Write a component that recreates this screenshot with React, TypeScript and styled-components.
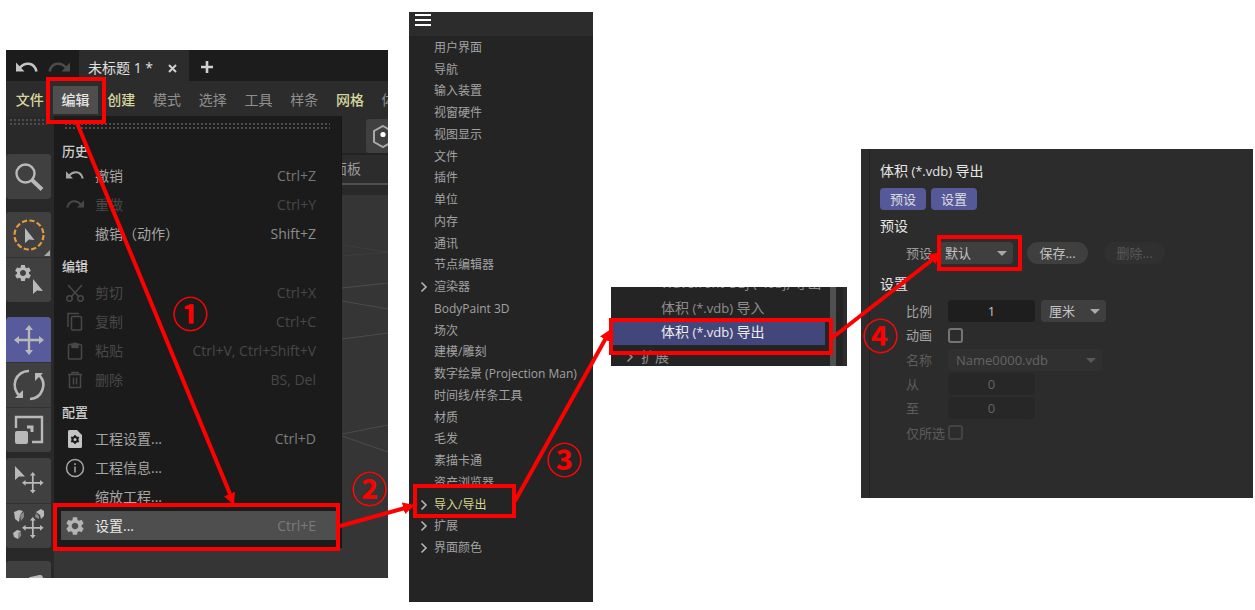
import React from "react";
import styled, { createGlobalStyle, css } from "styled-components";
import { MdSettings } from "react-icons/md";

const latin = '"Open Sans", "Noto Sans CJK SC", sans-serif';

const GlobalStyle = createGlobalStyle`
  *, *::before, *::after { box-sizing: border-box; }
  body { margin: 0; background: #fff; font-family: ${latin}; }
  button, input, select { font: inherit; color: inherit; border: 0; margin: 0; padding: 0; }
  ul { list-style: none; margin: 0; padding: 0; }
  h2, h3 { margin: 0; font-weight: 500; }
  svg { display: block; flex: none; }
`;

const red = "#fe0000";

/* ---------- page ---------- */

const Page = styled.main`
  position: relative;
  display: flex;
  align-items: flex-start;
  padding: 12px 2px 8px 6px;
`;

const Panel = styled.section<{ $grow: number; $top: number; $gap?: number }>`
  position: relative;
  flex: ${(p) => p.$grow} 1 0;
  min-width: 0;
  margin-top: ${(p) => p.$top}px;
  margin-left: ${(p) => p.$gap ?? 0}px;
`;

const Callout = styled.span<{ $x: number; $y: number; $w: number; $h: number }>`
  position: absolute;
  left: ${(p) => p.$x}px;
  top: ${(p) => p.$y}px;
  width: ${(p) => p.$w}px;
  height: ${(p) => p.$h}px;
  border: 4px solid ${red};
  pointer-events: none;
`;

const Step = styled.span<{ $x: number; $y: number }>`
  position: absolute;
  left: ${(p) => p.$x}px;
  top: ${(p) => p.$y}px;
  width: 36px;
  height: 36px;
  color: ${red};
  font: 700 36px/36px "Noto Sans CJK SC", sans-serif;
  text-align: center;
  z-index: 2;
`;

const Arrows = styled.svg`
  position: absolute;
  inset: 0;
  width: 100%;
  height: 100%;
  pointer-events: none;
`;

/* ---------- application window ---------- */

const Window = styled.div`
  height: 528px;
  overflow: hidden;
  display: flex;
  flex-direction: column;
  background: #2c2c2c;
`;

const TitleBar = styled.header`
  display: flex;
  align-items: center;
  height: 31px;
  flex: none;
  padding-left: 9px;
  background: #1c1c1c;
  color: #c4c4c4;
`;

const IconButton = styled.button<{ $dim?: boolean }>`
  display: grid;
  place-items: center;
  width: 32px;
  height: 31px;
  padding: 4px 0 0 1px;
  justify-content: start;
  background: none;
  color: ${(p) => (p.$dim ? "#4c4c4c" : "#c4c4c4")};
`;

const DocTab = styled.div`
  display: flex;
  align-items: center;
  justify-content: space-between;
  width: 110px;
  height: 31px;
  margin-right: 12px;
  padding: 2px 12px 0 9px;
  background: #2c2c2c;
  color: #e0e0e0;
  font-size: 14px;
  white-space: nowrap;
`;

const PlainButton = styled.button`
  display: grid;
  place-items: center;
  padding-top: 3px;
  background: none;
`;

const MenuBar = styled.nav`
  display: flex;
  align-items: flex-start;
  height: 35px;
  flex: none;
  overflow: hidden;
  padding: 5px 0 0 1px;
  background: #2c2c2c;
`;

const MenuButton = styled.button<{ $tone?: "accent" | "active" }>`
  flex: 0 0 12%;
  height: 28px;
  background: ${(p) => (p.$tone === "active" ? "#4e4e4e" : "none")};
  color: ${(p) =>
    p.$tone === "accent" ? "#d6d69c" : p.$tone === "active" ? "#e4e4e4" : "#8f8f8f"};
  font-size: 14px;
  line-height: 26px;
  font-weight: ${(p) => (p.$tone ? 500 : 400)};
  white-space: nowrap;
`;

const Body = styled.div`
  display: flex;
  flex: 1;
  min-height: 0;
`;

const dots = css`
  background-image: radial-gradient(circle at 1px 1px, #4c4c4c 1px, transparent 1px);
  background-size: 4px 4px;
`;

const Rail = styled.aside`
  display: flex;
  flex-direction: column;
  width: 48px;
  flex: none;
  background: #292929;
`;

const RailGrip = styled.div`
  height: 8px;
  margin: 3px 7px 27px 4px;
  flex: none;
  ${dots}
`;

const ToolGroup = styled.div<{ $after: number }>`
  display: flex;
  flex-direction: column;
  width: 45px;
  flex: none;
  margin-bottom: ${(p) => p.$after}px;
  border-radius: 4px;
  overflow: hidden;
  background: #404040;
`;

const Tool = styled.button<{ $active?: boolean }>`
  position: relative;
  display: grid;
  place-items: center;
  height: 45px;
  background: ${(p) => (p.$active ? "#575b9c" : "#404040")};
  color: #b9b9b9;
  & + & { border-top: 1px solid #333; }
`;

const Workspace = styled.div`
  position: relative;
  flex: 1;
  display: flex;
  flex-direction: column;
  min-width: 0;
`;

const ToolStrip = styled.div`
  display: flex;
  justify-content: flex-end;
  height: 39px;
  flex: none;
  padding-top: 3px;
  border-bottom: 2px solid #222;
  background: #2c2c2c;
`;

const StripButton = styled.button`
  width: 22px;
  height: 34px;
  overflow: hidden;
  background: #404040;
  border-radius: 3px 0 0 3px;
  padding-left: 6px;
`;

const PanelTabs = styled.div`
  display: flex;
  justify-content: flex-end;
  align-items: center;
  height: 30px;
  flex: none;
  padding-right: 27px;
  border-bottom: 2px solid #505050;
  background: #2c2c2c;
  color: #9a9a9a;
  font-size: 14px;
  line-height: 26px;
`;

const Viewport = styled.div`
  display: flex;
  justify-content: flex-end;
  flex: 1;
  border-top: 10px solid #292929;
  background: #353535;
`;

const Menu = styled.div`
  position: absolute;
  left: 0;
  top: 0;
  width: 288px;
  padding-bottom: 8px;
  background: #1b1b1b;
  border-right: 1px solid #161616;
`;

const MenuGrip = styled.div`
  height: 8px;
  margin: 7px 11px 0;
  ${dots}
`;

const MenuHeading = styled.h3`
  height: 30px;
  padding: 8px 0 0 8px;
  color: #cfcfcf;
  font-size: 13px;
  line-height: 20px;
  &:first-of-type { padding-top: 10px; }
`;

const MenuItem = styled.button<{ $state?: "off" | "hot" }>`
  display: grid;
  grid-template-columns: 33px 1fr auto;
  align-items: center;
  width: 275px;
  height: 29px;
  margin-left: 7px;
  padding: 0 20px 0 1px;
  background: ${(p) => (p.$state === "hot" ? "#4e4e4e" : "none")};
  color: ${(p) => (p.$state === "off" ? "#484848" : p.$state === "hot" ? "#e8e8e8" : "#a6a6a6")};
  font-size: 14px;
  line-height: 20px;
  text-align: left;
  white-space: nowrap;
`;

const IconCell = styled.span`
  display: grid;
  place-items: center;
  width: 26px;
`;

const Shortcut = styled.kbd<{ $tone?: string }>`
  font: 14px/20px ${latin};
  color: ${(p) => p.$tone ?? "inherit"};
`;

/* ---------- preference tree ---------- */

const Tree = styled.div`
  height: 590px;
  overflow: hidden;
  background: #242424;
`;

const TreeHeader = styled.header`
  display: flex;
  height: 25px;
  padding: 2px 6px;
  border-bottom: 1px solid #242424;
  background: #2c2c2c;
`;

const Burger = styled.button`
  width: 16px;
  height: 12px;
  background: linear-gradient(#fff 2px, transparent 2px 5px, #fff 5px 7px, transparent 7px 10px, #fff 10px);
`;

const TreeList = styled.ul`
  display: grid;
  grid-auto-rows: 1fr;
  height: 522px;
`;

const TreeItem = styled.li<{ $accent?: boolean }>`
  display: grid;
  grid-template-columns: 14px 1fr;
  align-items: center;
  padding-left: 11px;
  color: ${(p) => (p.$accent ? "#d6d68c" : "#a2a2a2")};
  font-size: 12px;
  line-height: 20px;
  white-space: nowrap;
`;

const Twist = styled.span`
  color: #b4b4b4;
`;

/* ---------- format list ---------- */

const Formats = styled.div`
  display: flex;
  height: 79px;
  overflow: hidden;
  padding-left: 2px;
  background: #242424;
`;

const FormatList = styled.ul`
  display: grid;
  grid-auto-rows: 1fr;
  flex: 1;
  min-width: 0;
  height: 98px;
  margin-top: -16px;
`;

const FormatItem = styled.li<{ $selected?: boolean; $branch?: boolean }>`
  display: flex;
  align-items: center;
  gap: ${(p) => (p.$branch ? 7 : 0)}px;
  padding-left: ${(p) => (p.$branch ? 13 : 48)}px;
  background: ${(p) => (p.$selected ? "#43467a" : "none")};
  color: ${(p) => (p.$selected ? "#ececec" : "#8e8e8e")};
  font-size: 14px;
  line-height: 20px;
  white-space: pre;
`;

const Latin = styled.span`
  font-size: 13px;
  white-space: pre;
`;

const ScrollTrack = styled.div`
  width: 22px;
  flex: none;
  padding-left: 5px;
  border-right: 4px solid #2c2c2c;
`;

const ScrollThumb = styled.div`
  width: 6px;
  height: 79px;
  background: #505050;
`;

/* ---------- export options ---------- */

const Options = styled.div`
  display: flex;
  height: 349px;
  padding-left: 8px;
  background: #2c2c2c;
`;

const OptionsBody = styled.form`
  flex: 1;
  padding: 12px 10px;
  border-left: 1px solid #222;
  font-size: 13px;
  line-height: 20px;
  color: #9c9c9c;
`;

const Title = styled.h2`
  color: #e6e6e6;
  font-size: 14px;
  font-weight: 400;
  line-height: 20px;
`;

const Chips = styled.div`
  display: flex;
  gap: 5px;
  margin: 7px 0 6px;
`;

const Chip = styled.button`
  width: 46px;
  height: 22px;
  border-radius: 4px;
  background: #55599a;
  color: #dedede;
`;

const PresetRow = styled.div`
  display: flex;
  align-items: center;
  height: 22px;
  margin: 6px 0 10px;
  padding-left: 26px;
`;

const PresetLabel = styled.label`
  width: 31px;
`;

const Pill = styled.button<{ $left: number }>`
  width: 61px;
  height: 22px;
  margin-left: ${(p) => p.$left}px;
  border-radius: 11px;
  background: #3f3f3f;
  color: #c0c0c0;
  &:disabled { background: #303030; color: #585858; }
`;

const Fields = styled.div`
  display: grid;
  grid-auto-rows: 1fr;
  height: 146px;
  margin-top: 5px;
  padding-left: 26px;
`;

const Field = styled.div<{ $off?: boolean }>`
  display: grid;
  grid-template-columns: 42px auto auto 1fr;
  align-items: center;
  color: ${(p) => (p.$off ? "#5c5c5c" : "#a4a4a4")};
  label { white-space: nowrap; }
`;

const NumberBox = styled.input`
  width: 87px;
  height: 22px;
  border-radius: 4px;
  background: #1e1e1e;
  color: #c4c4c4;
  text-align: center;
  &:disabled { background: #272727; color: #646464; }
`;

const SelectWrap = styled.span<{ $w: number; $left?: number; $off?: boolean }>`
  position: relative;
  width: ${(p) => p.$w}px;
  height: 22px;
  margin-left: ${(p) => p.$left ?? 0}px;
  border-radius: 4px;
  background: ${(p) => (p.$off ? "#303030" : "#3f3f3f")};
  color: ${(p) => (p.$off ? "#646464" : "#c4c4c4")};
  &::after {
    content: "";
    position: absolute;
    right: 6px;
    top: 9px;
    border: 5px solid transparent;
    border-top-color: ${(p) => (p.$off ? "#585858" : "#a8a8a8")};
    border-bottom: 0;
  }
`;

const Select = styled.select`
  width: 100%;
  height: 22px;
  padding-left: 8px;
  appearance: none;
  background: none;
  opacity: 1;
`;

const Check = styled.input`
  width: 15px;
  height: 15px;
  appearance: none;
  border: 2px solid #747474;
  border-radius: 3px;
  &:disabled { border-color: #444; }
`;

/* ---------- icons ---------- */

const Undo = ({ w = 22, flip = false }: { w?: number; flip?: boolean }) => (
  <svg width={w} height={(w * 14) / 22} viewBox="0 0 22 14">
    <g transform={flip ? "translate(22 0) scale(-1 1)" : undefined}>
      <path d="M0 1.500v9h8.500z" fill="currentColor" />
      <path d="M3 7.500C9 .500 18 1 20.500 10.500" fill="none" stroke="currentColor" strokeWidth="2.600" />
    </g>
  </svg>
);

const Line = ({ children, size = 20, sw = 1.5 }: { children: React.ReactNode; size?: number; sw?: number }) => (
  <svg width={size} height={size} viewBox="0 0 20 20" fill="none" stroke="currentColor" strokeWidth={sw}>
    {children}
  </svg>
);

const Cut = () => (
  <Line>
    <path d="M3 2l11 12M17 2L6 14" />
    <circle cx="4.500" cy="15.500" r="2.700" />
    <circle cx="15.500" cy="15.500" r="2.700" />
  </Line>
);
const Copy = () => (
  <Line>
    <path d="M3 15V1.500h11" />
    <rect x="6.500" y="4.500" width="10" height="13.500" rx="1" />
  </Line>
);
const Paste = () => (
  <Line>
    <rect x="3.500" y="3.500" width="13" height="14.500" rx="1" />
    <path d="M7 3h1.500a1.600 1.600 0 013 0H13v3.500H7z" fill="currentColor" />
  </Line>
);
const Trash = () => (
  <Line>
    <path d="M3 4.500h14M7 4V2.500h6V4M4.500 4.500V17.500h11V4.500M8.500 7.500v7M11.500 7.500v7" />
  </Line>
);
const ProjectSettings = () => (
  <svg width="20" height="20" viewBox="0 0 20 20">
    <path d="M4.500 1H12l5 5v11.500a1.500 1.500 0 01-1.500 1.500h-11A1.500 1.500 0 013 17.500v-15A1.500 1.500 0 014.500 1z" fill="#c4c4c4" />
    <circle cx="10" cy="10.500" r="2.600" fill="none" stroke="#1b1b1b" strokeWidth="2" />
    <path d="M10 6v9M6.100 8.250l7.800 4.500M6.100 12.750l7.800-4.500" stroke="#1b1b1b" strokeWidth="1.600" />
    <circle cx="10" cy="10.500" r="1.500" fill="#c4c4c4" />
  </svg>
);
const Info = () => (
  <Line>
    <circle cx="10" cy="10" r="8.500" />
    <path d="M10 8.500V14.500M10 5.200v1.800" />
  </Line>
);

const Search = () => (
  <svg width="30" height="30" viewBox="0 0 30 30" fill="none" stroke="currentColor">
    <circle cx="11.500" cy="11.500" r="9" strokeWidth="2.400" />
    <path d="M18 18l10 9.500" strokeWidth="4" />
  </svg>
);
const LiveSelect = () => (
  <svg width="34" height="34" viewBox="0 0 34 34">
    <circle cx="17" cy="17" r="14.500" fill="none" stroke="#e79a3c" strokeWidth="2.200" strokeDasharray="5.200 2.390" />
    <path d="M13 10v15l4-3.500 5.500.500z" fill="currentColor" />
  </svg>
);
const GearCursor = () => (
  <svg width="34" height="34" viewBox="0 0 34 34" fill="currentColor">
    <MdSettings x="1" y="0" size={20} />
    <path d="M21 16v15l4-3.500 6 .500z" />
  </svg>
);
const moveArrows =
  "M15 0l4 5h-2.800v8.800H25V11l5 4-5 4v-2.800h-8.800V25H19l-4 5-4-5h2.800v-8.800H5V19l-5-4 5-4v2.800h8.800V5H11z";
const Move = () => (
  <svg width="30" height="30" viewBox="0 0 30 30" fill="currentColor">
    <path d={moveArrows} />
  </svg>
);
const Rotate = () => (
  <svg width="34" height="34" viewBox="0 0 34 34" fill="none" stroke="currentColor" strokeWidth="2.600">
    <path d="M17 3A14 14 0 008 28" />
    <path d="M18 31A14 14 0 0027 7" />
    <path d="M3 30h8v-8z M31 5h-8v8z" fill="currentColor" stroke="none" />
  </svg>
);
const Scale = () => (
  <svg width="30" height="30" viewBox="0 0 30 30" fill="none" stroke="currentColor" strokeWidth="2.400">
    <path d="M2 13V2h26v25H18" />
    <path d="M13 12h5v5" strokeWidth="3" />
    <rect x="1" y="16" width="13" height="13" rx="2" fill="currentColor" stroke="none" />
  </svg>
);
const CursorMove = () => (
  <svg width="34" height="34" viewBox="0 0 34 34" fill="currentColor">
    <path d="M3 2v14l4-3.500 6 0z" />
    <path d={moveArrows} transform="translate(10 8) scale(.72)" />
  </svg>
);
const CubesMove = () => (
  <svg width="34" height="34" viewBox="0 0 34 34" fill="currentColor">
    <path d="M2 3l5-2 4 1-3 4-1 7-4-3z M24 3l5-3 3 2v5l-3 3-1-4z M1 24l4-3 4 1-3 3v5l-4-2z" />
    <path d="M8 6l4-3 0 5-3 4z M24 4l3 3 0 3-4-2z M6 25l3-2v4l-3 3z" opacity=".6" />
    <path d={moveArrows} transform="translate(10 8) scale(.72)" />
  </svg>
);
const Bend = () => (
  <svg width="34" height="34" viewBox="0 0 34 34" fill="none" stroke="currentColor" strokeLinejoin="round">
    <path d="M11 23l8-10 9-2-1 12" strokeWidth="6" />
  </svg>
);
const Hexagon = () => (
  <svg width="26" height="34" viewBox="0 0 26 34">
    <path d="M11 7l9 5v11l-9 5-9-5V12z" fill="none" stroke="#a8a8a8" strokeWidth="2" />
    <circle cx="11" cy="15.500" r="2.600" fill="#fff" />
  </svg>
);
const Chevron = () => (
  <svg width="8" height="12" viewBox="0 0 8 12" fill="none" stroke="currentColor" strokeWidth="1.600">
    <path d="M1.500 1.500L6 6l-4.500 4.500" />
  </svg>
);
const Corner = styled.i`
  position: absolute;
  right: 1px;
  bottom: 1px;
  border: 3px solid transparent;
  border-right-color: #a8a8a8;
  border-bottom-color: #a8a8a8;
`;

/* ---------- data ---------- */

type Entry = {
  label: string;
  keys?: string;
  tone?: string;
  icon?: React.ReactNode;
  state?: "off" | "hot";
};

const sections: { title: string; items: Entry[] }[] = [
  {
    title: "历史",
    items: [
      { label: "撤销", keys: "Ctrl+Z", tone: "#767676", icon: <Undo w={18} /> },
      { label: "重做", keys: "Ctrl+Y", icon: <Undo w={18} flip />, state: "off" },
      { label: "撤销（动作）", keys: "Shift+Z", tone: "#8c8c8c" },
    ],
  },
  {
    title: "编辑",
    items: [
      { label: "剪切", keys: "Ctrl+X", icon: <Cut />, state: "off" },
      { label: "复制", keys: "Ctrl+C", icon: <Copy />, state: "off" },
      { label: "粘贴", keys: "Ctrl+V, Ctrl+Shift+V", icon: <Paste />, state: "off" },
      { label: "删除", keys: "BS, Del", icon: <Trash />, state: "off" },
    ],
  },
  {
    title: "配置",
    items: [
      { label: "工程设置...", keys: "Ctrl+D", tone: "#7c7c7c", icon: <ProjectSettings /> },
      { label: "工程信息...", icon: <Info /> },
      { label: "缩放工程..." },
      { label: "设置...", keys: "Ctrl+E", tone: "#7a7a7a", icon: <MdSettings size={22} color="#b4b4b4" />, state: "hot" },
    ],
  },
];

const menus: { label: string; tone?: "accent" | "active" }[] = [
  { label: "文件", tone: "accent" },
  { label: "编辑", tone: "active" },
  { label: "创建", tone: "accent" },
  { label: "模式" },
  { label: "选择" },
  { label: "工具" },
  { label: "样条" },
  { label: "网格", tone: "accent" },
  { label: "体积" },
];

const categories = [
  "用户界面", "导航", "输入装置", "视窗硬件", "视图显示", "文件", "插件", "单位",
  "内存", "通讯", "节点编辑器", "渲染器", "BodyPaint 3D", "场次", "建模/雕刻",
  "数字绘景 (Projection Man)", "时间线/样条工具", "材质", "毛发", "素描卡通",
  "资产浏览器", "导入/导出", "扩展", "界面颜色",
];
const branches = ["渲染器", "导入/导出", "扩展", "界面颜色"];

/* ---------- app ---------- */

const AppWindow = () => (
  <Panel $grow={382} $top={38}>
    <Window>
      <TitleBar>
        <IconButton aria-label="撤销"><Undo /></IconButton>
        <IconButton aria-label="重做" $dim><Undo flip /></IconButton>
        <DocTab>
          <span>未标题 1 *</span>
          <PlainButton aria-label="关闭">
            <svg width="9" height="9" viewBox="0 0 9 9" stroke="#d0d0d0" strokeWidth="2">
              <path d="M1 1l7 7M8 1L1 8" />
            </svg>
          </PlainButton>
        </DocTab>
        <PlainButton aria-label="新建">
          <svg width="12" height="12" viewBox="0 0 12 12" stroke="#d0d0d0" strokeWidth="2.600">
            <path d="M6 0v12M0 6h12" />
          </svg>
        </PlainButton>
      </TitleBar>
      <MenuBar>
        {menus.map((m) => (
          <MenuButton key={m.label} $tone={m.tone}>{m.label}</MenuButton>
        ))}
      </MenuBar>
      <Body>
        <Rail>
          <RailGrip />
          <ToolGroup $after={13}>
            <Tool aria-label="搜索"><Search /></Tool>
          </ToolGroup>
          <ToolGroup $after={15}>
            <Tool aria-label="实时选择"><LiveSelect /><Corner /></Tool>
            <Tool aria-label="选择设置"><GearCursor /></Tool>
          </ToolGroup>
          <ToolGroup $after={6}>
            <Tool aria-label="移动" $active><Move /></Tool>
            <Tool aria-label="旋转"><Rotate /></Tool>
            <Tool aria-label="缩放"><Scale /></Tool>
          </ToolGroup>
          <ToolGroup $after={13}>
            <Tool aria-label="放置"><CursorMove /></Tool>
            <Tool aria-label="散布"><CubesMove /></Tool>
          </ToolGroup>
          <ToolGroup $after={0}>
            <Tool aria-label="弯曲"><Bend /></Tool>
          </ToolGroup>
        </Rail>
        <Workspace>
          <ToolStrip>
            <StripButton aria-label="资产"><Hexagon /></StripButton>
          </ToolStrip>
          <PanelTabs>面板</PanelTabs>
          <Viewport>
            <svg width="46" height="383" viewBox="0 0 46 383" fill="none" stroke="#4c4c4c">
              <path d="M0 50l46 7M0 61l46-4" stroke="#3e3e3e" />
              <path d="M0 93l46-5M0 106l46 8M0 144l46-6M0 239l46-9M0 241l46 16" />
            </svg>
          </Viewport>
          <Menu>
            <MenuGrip />
            {sections.map((s) => (
              <React.Fragment key={s.title}>
                <MenuHeading>{s.title}</MenuHeading>
                {s.items.map((i) => (
                  <MenuItem key={i.label} $state={i.state}>
                    <IconCell>{i.icon}</IconCell>
                    <span>{i.label}</span>
                    {i.keys && <Shortcut $tone={i.tone}>{i.keys}</Shortcut>}
                  </MenuItem>
                ))}
              </React.Fragment>
            ))}
          </Menu>
        </Workspace>
      </Body>
    </Window>
    <Callout $x={40} $y={27} $w={60} $h={47} />
    <Callout $x={47} $y={453} $w={287} $h={48} />
    <Step $x={166} $y={244}>①</Step>
    <Step $x={345} $y={419}>②</Step>
  </Panel>
);

const PreferenceTree = () => (
  <Panel $grow={184} $top={0} $gap={21}>
    <Tree>
      <TreeHeader><Burger aria-label="菜单" /></TreeHeader>
      <TreeList>
        {categories.map((c) => (
          <TreeItem key={c} $accent={c === "导入/导出"}>
            <Twist>{branches.includes(c) && <Chevron />}</Twist>
            <span>{c}</span>
          </TreeItem>
        ))}
      </TreeList>
    </Tree>
    <Callout $x={4} $y={472} $w={103} $h={34} />
    <Step $x={137} $y={428}>③</Step>
  </Panel>
);

const FormatPicker = () => (
  <Panel $grow={236} $top={275} $gap={18}>
    <Formats>
      <FormatList>
        <FormatItem><Latin>Wavefront OBJ (*.obj) </Latin>导出</FormatItem>
        <FormatItem>体积<Latin> (*.vdb) </Latin>导入</FormatItem>
        <FormatItem $selected>体积<Latin> (*.vdb) </Latin>导出</FormatItem>
        <FormatItem $branch><Chevron />扩展</FormatItem>
      </FormatList>
      <ScrollTrack><ScrollThumb /></ScrollTrack>
    </Formats>
    <Callout $x={-2} $y={31} $w={224} $h={37} />
  </Panel>
);

const ExportOptions = () => (
  <Panel $grow={392} $top={137} $gap={14}>
    <Options>
      <OptionsBody onSubmit={(e) => e.preventDefault()}>
        <Title>体积<Latin> (*.vdb) </Latin>导出</Title>
        <Chips>
          <Chip type="button">预设</Chip>
          <Chip type="button">设置</Chip>
        </Chips>
        <Title as="h3">预设</Title>
        <PresetRow>
          <PresetLabel htmlFor="preset">预设</PresetLabel>
          <SelectWrap $w={76}>
            <Select id="preset"><option>默认</option></Select>
          </SelectWrap>
          <Pill type="button" $left={14}>保存...</Pill>
          <Pill type="button" $left={16} disabled>删除...</Pill>
        </PresetRow>
        <Title as="h3">设置</Title>
        <Fields>
          <Field>
            <label htmlFor="scale">比例</label>
            <NumberBox id="scale" defaultValue="1" />
            <SelectWrap $w={65} $left={6}>
              <Select aria-label="单位"><option>厘米</option></Select>
            </SelectWrap>
          </Field>
          <Field>
            <label htmlFor="anim">动画</label>
            <Check id="anim" type="checkbox" />
          </Field>
          <Field $off>
            <label htmlFor="name">名称</label>
            <SelectWrap $w={154} $off>
              <Select id="name" disabled><option>Name0000.vdb</option></Select>
            </SelectWrap>
          </Field>
          <Field $off>
            <label htmlFor="from">从</label>
            <NumberBox id="from" defaultValue="0" disabled />
          </Field>
          <Field $off>
            <label htmlFor="to">至</label>
            <NumberBox id="to" defaultValue="0" disabled />
          </Field>
          <Field $off>
            <label htmlFor="only">仅所选</label>
            <Check id="only" type="checkbox" disabled />
          </Field>
        </Fields>
      </OptionsBody>
    </Options>
    <Callout $x={76} $y={86} $w={85} $h={36} />
    <Step $x={1} $y={167}>④</Step>
  </Panel>
);

export default function App() {
  return (
    <>
      <GlobalStyle />
      <Page>
        <AppWindow />
        <PreferenceTree />
        <FormatPicker />
        <ExportOptions />
        <Arrows viewBox="0 0 1255 610" preserveAspectRatio="none" stroke={red} strokeWidth="4">
          <defs>
            <marker id="head" viewBox="0 0 12 12" refX="12" refY="6" markerWidth="12" markerHeight="12" markerUnits="userSpaceOnUse" orient="auto">
              <path d="M0 0l12 6-12 6z" fill={red} stroke="none" />
            </marker>
          </defs>
          <path d="M77 123L230 494" />
          <path d="M77 123L234 505" stroke="none" markerEnd="url(#head)" />
          <path d="M340 526L405 508" />
          <path d="M340 526L415 505" stroke="none" markerEnd="url(#head)" />
          <path d="M515 501L606 338" />
          <path d="M515 501L611 329" stroke="none" markerEnd="url(#head)" />
          <path d="M832 338L932 260" />
          <path d="M832 338L941 252" stroke="none" markerEnd="url(#head)" />
        </Arrows>
      </Page>
    </>
  );
}
